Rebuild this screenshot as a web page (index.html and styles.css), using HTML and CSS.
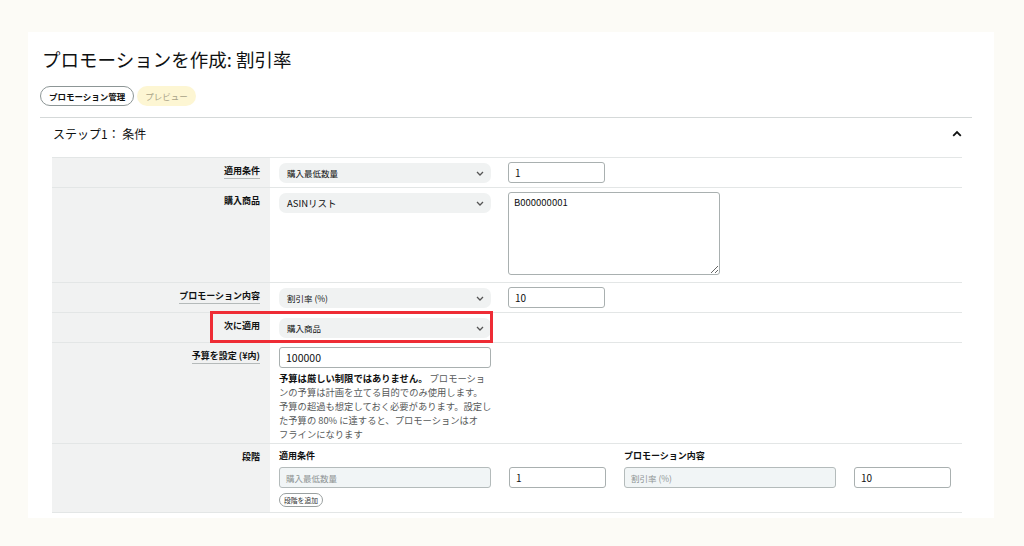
FILE: index.html
```html
<!DOCTYPE html>
<html lang="ja">
<head>
<meta charset="utf-8">
<title>プロモーションを作成</title>
<link rel="stylesheet" href="styles.css">
</head>
<body>
<div class="page">
  <div class="panel">
    <h1 class="title">プロモーションを作成: 割引率</h1>
    <div class="pills">
      <span class="pill pill-outline">プロモーション管理</span>
      <span class="pill pill-yellow">プレビュー</span>
    </div>
    <section class="step">
      <div class="step-head">
        <span>ステップ1： 条件</span>
        <svg class="up" width="10" height="7" viewBox="0 0 10 7"><path d="M1.2 5.8L5 2 8.8 5.8" fill="none" stroke="#0f1111" stroke-width="1.8"/></svg>
      </div>
      <div class="table">
        <div class="row">
          <div class="label"><span class="tip">適用条件</span></div>
          <div class="cell">
            <div class="select"><span>購入最低数量</span><svg width="8" height="5" viewBox="0 0 8 5"><path d="M1 1l3 3 3-3" fill="none" stroke="#555" stroke-width="1.3"/></svg></div>
            <div class="input">1</div>
          </div>
        </div>
        <div class="row">
          <div class="label"><span>購入商品</span></div>
          <div class="cell cell-tall">
            <div class="select"><span class="latin">ASINリスト</span><svg width="8" height="5" viewBox="0 0 8 5"><path d="M1 1l3 3 3-3" fill="none" stroke="#555" stroke-width="1.3"/></svg></div>
            <textarea class="textarea" readonly>B000000001</textarea>
          </div>
        </div>
        <div class="row">
          <div class="label"><span class="tip">プロモーション内容</span></div>
          <div class="cell">
            <div class="select"><span>割引率 (%)</span><svg width="8" height="5" viewBox="0 0 8 5"><path d="M1 1l3 3 3-3" fill="none" stroke="#555" stroke-width="1.3"/></svg></div>
            <div class="input">10</div>
          </div>
        </div>
        <div class="row">
          <div class="label"><span>次に適用</span></div>
          <div class="cell">
            <div class="select"><span>購入商品</span><svg width="8" height="5" viewBox="0 0 8 5"><path d="M1 1l3 3 3-3" fill="none" stroke="#555" stroke-width="1.3"/></svg></div>
          </div>
          <div class="highlight"></div>
        </div>
        <div class="row">
          <div class="label"><span class="tip">予算を設定 (¥内)</span></div>
          <div class="cell cell-col">
            <div class="input input-wide">100000</div>
            <p class="help"><b>予算は厳しい制限ではありません。</b> プロモーショ<br>ンの予算は計画を立てる目的でのみ使用します。<br>予算の超過も想定しておく必要があります。設定し<br>た予算の 80% に達すると、プロモーションはオ<br>フラインになります</p>
          </div>
        </div>
        <div class="row">
          <div class="label"><span>段階</span></div>
          <div class="cell tiers">
            <div class="tier-head">適用条件</div>
            <div class="tier-head tier-head-2">プロモーション内容</div>
            <div class="disabled">購入最低数量</div>
            <div class="input">1</div>
            <div class="disabled">割引率 (%)</div>
            <div class="input">10</div>
            <span class="add">段階を追加</span>
          </div>
        </div>
      </div>
    </section>
  </div>
</div>
</body>
</html>
```
FILE: styles.css
```css
body {
  margin: 0;
  background: #fcfbf6;
  font-family: "Noto Sans CJK JP", "Noto Sans", sans-serif;
  color: #0f1111;
}
.page {
  padding: 32px 30px 0 28px;
}
.panel {
  background: #fff;
  width: 932px;
  padding: 15px 22px 5px 12px;
}
.title {
  margin: 0 0 0 2px;
  font-size: 18.5px;
  font-weight: 400;
  line-height: 24px;
}
.pills {
  display: flex;
  gap: 3px;
  margin-top: 15px;
}
.pill {
  height: 20px;
  box-sizing: border-box;
  border-radius: 10px;
  font-size: 8.5px;
  display: flex;
  align-items: center;
  padding: 0 8px;
}
.pill-outline {
  border: 1px solid #8d9696;
  font-weight: 700;
  padding: 0 8px;
}
.pill-yellow {
  background: #fdf6d3;
  color: #a8a287;
}
.step {
  margin-top: 11px;
  border-top: 1px solid #d5d9d9;
}
.step-head {
  height: 31px;
  display: flex;
  align-items: center;
  justify-content: space-between;
  padding: 0 10px 0 13px;
  font-size: 12px;
}
.table {
  margin: 8px 10px 0 12px;
  border-top: 1px solid #e3e6e6;
}
.row {
  display: flex;
  border-bottom: 1px solid #e3e6e6;
  position: relative;
}
.label {
  width: 218px;
  flex: none;
  background: #f1f2f2;
  box-sizing: border-box;
  padding: 6px 10px 0 0;
  text-align: right;
  font-size: 9px;
  font-weight: 700;
  line-height: 13px;
}
.tip {
  border-bottom: 1px solid #b5baba;
  padding-bottom: 1px;
}
.cell {
  flex: 1;
  padding: 4px 0 4px 9px;
  display: flex;
  gap: 17px;
  align-items: flex-start;
}
.cell-tall {
  padding-bottom: 7px;
}
.cell-col {
  flex-direction: column;
  gap: 0;
  padding: 4px 0 2px 9px;
}
.select {
  width: 212px;
  height: 20px;
  margin-top: 1px;
  box-sizing: border-box;
  background: #f0f2f2;
  border-radius: 7px;
  display: flex;
  align-items: center;
  justify-content: space-between;
  padding: 0 7px 0 8px;
  font-size: 8.5px;
}
.latin {
  font-size: 9.5px;
}
.input {
  width: 97px;
  height: 21px;
  box-sizing: border-box;
  border: 1px solid #a9b0b0;
  border-radius: 3px;
  font-size: 10px;
  padding-left: 6px;
  display: flex;
  align-items: center;
}
.input-wide {
  width: 212px;
  font-size: 10.5px;
}
.textarea {
  display: block;
  width: 212px;
  height: 83px;
  box-sizing: border-box;
  border: 1px solid #a9b0b0;
  border-radius: 3px;
  font-family: "Noto Sans CJK JP", "Noto Sans", sans-serif;
  font-size: 9.5px;
  color: #0f1111;
  padding: 2px 5px;
  margin: 0;
  outline: none;
}
.highlight {
  position: absolute;
  left: 158px;
  top: -2px;
  width: 283px;
  height: 32px;
  box-sizing: border-box;
  border: 3px solid #ee2c35;
}
.help {
  margin: 3px 0 0;
  font-size: 9.3px;
  line-height: 14px;
  color: #565959;
  white-space: nowrap;
}
.help b {
  color: #0f1111;
}
.tiers {
  display: grid;
  grid-template-columns: 212px 97px 212px 96px;
  column-gap: 18px;
  row-gap: 0;
  align-items: start;
  padding: 5px 0 5px 9px;
}
.tier-head {
  grid-column: 1 / span 2;
  font-size: 9px;
  font-weight: 700;
  line-height: 13px;
  margin-bottom: 5px;
}
.tier-head-2 {
  grid-column: 3 / span 2;
  grid-row: 1;
}
.disabled {
  height: 21px;
  box-sizing: border-box;
  border: 1px solid #b4bbbb;
  border-radius: 3px;
  background: #f1f5f6;
  color: #8e9494;
  font-size: 8.5px;
  padding-left: 6px;
  display: flex;
  align-items: center;
}
.add {
  grid-column: 1;
  justify-self: start;
  margin-top: 5px;
  height: 14px;
  box-sizing: border-box;
  border: 1px solid #9aa0a0;
  border-radius: 7px;
  font-size: 6.8px;
  padding: 0 4px;
  display: flex;
  align-items: center;
  color: #333;
}
```
